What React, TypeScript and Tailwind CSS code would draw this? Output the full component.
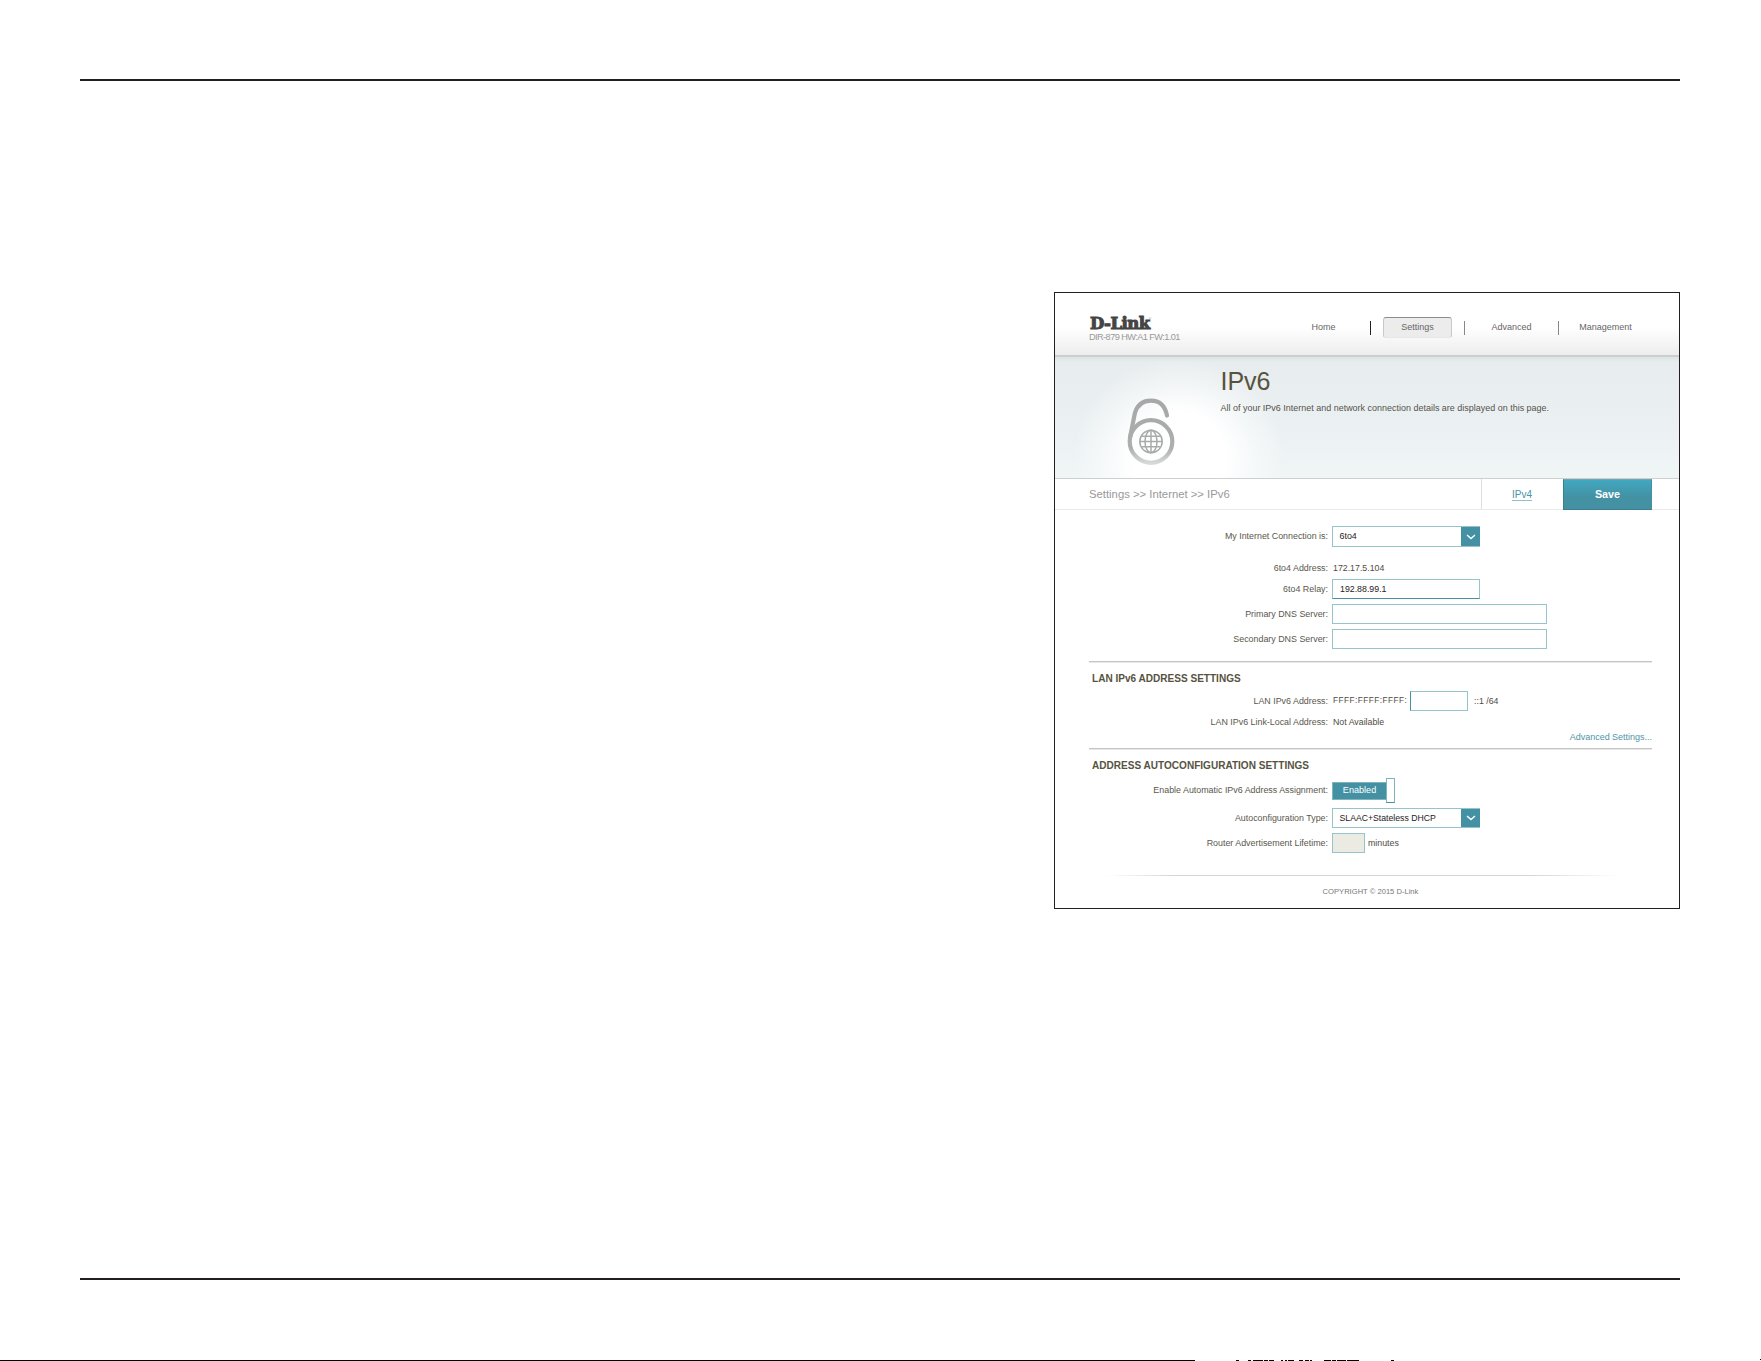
import React from 'react';

const label = 'w-[239px] shrink-0 text-right text-[8.9px] leading-none text-[#5a574d]';

function Row({ text, className, children }: { text: string; className: string; children: React.ReactNode }) {
  return (
    <div className={`flex items-center ${className}`}>
      <div className={label}>{text}</div>
      <div className="ml-1 flex items-center text-[8.8px] leading-none text-[#4f4c42]">{children}</div>
    </div>
  );
}

function Select({ text, className, textClass }: { text: string; className: string; textClass: string }) {
  return (
    <div className={`flex w-[148px] items-stretch justify-between border border-r-0 border-[#96c4cb] bg-white ${className}`}>
      <span className={`self-center pl-[6.5px] text-[#222] ${textClass}`}>{text}</span>
      <span className="flex w-[19px] items-center justify-center bg-[#4391a3]">
        <svg width="10" height="6" viewBox="0 0 10 6" fill="none" stroke="#fff" strokeWidth="1.4">
          <path d="M1 1 L5 4.6 L9 1" />
        </svg>
      </span>
    </div>
  );
}

function SixLock() {
  return (
    <svg width="48" height="68" viewBox="0 0 48 68" fill="none">
      <defs>
        <linearGradient id="grey" gradientUnits="userSpaceOnUse" x1="0" y1="0" x2="0" y2="67">
          <stop offset="0" stopColor="#a6a8a8" />
          <stop offset="0.75" stopColor="#adafaf" />
          <stop offset="1" stopColor="#dcdddd" />
        </linearGradient>
      </defs>
      <circle cx="24" cy="43.5" r="21.3" stroke="url(#grey)" strokeWidth="4.2" />
      <path d="M3.2 38.5 L7.9 15 C10.5 6 16 2.6 24 2.6 C33 2.6 38.2 8.5 40 17.5" stroke="url(#grey)" strokeWidth="4.2" strokeLinecap="round" />
      <g stroke="#a9abab" strokeWidth="1.5">
        <circle cx="24" cy="43.5" r="11.2" />
        <ellipse cx="24" cy="43.5" rx="6" ry="11.2" />
        <path d="M24 32.3V54.7M12.8 43.5H35.2M14.5 38.3H33.5M14.5 48.7H33.5" />
      </g>
    </svg>
  );
}

const bits = [
  [1236, 3], [1248, 3], [1253, 10], [1264, 4], [1269, 5], [1281, 2], [1285, 2], [1288, 6],
  [1299, 4], [1305, 4], [1310, 2], [1324, 7], [1332, 4], [1337, 9], [1347, 12], [1391, 3],
];

export default function App() {
  return (
    <div className="flex h-[1361px] w-[1761px] flex-col overflow-hidden bg-white font-['Liberation_Sans',Arial,sans-serif]">
      <div className="mt-[79px] ml-[80px] h-[2px] w-[1600px] shrink-0 bg-[#231f20]" />
      <main className="mt-[211px] mr-[81px] flex h-[617px] w-[626px] shrink-0 flex-col self-end border border-[#231f20] bg-white">
        <header className="flex h-[62px] shrink-0 justify-between bg-linear-to-b from-white from-55% to-[#ededed] pr-[26px] pl-[34px]">
          <div className="pt-[23px]">
            <div className="flex h-[16px] items-center pl-px">
              <span className="w-[59px] origin-left scale-x-[1.03] font-['DejaVu_Serif'] text-[16px] leading-none font-bold tracking-[-0.5px] whitespace-nowrap text-[#444] [-webkit-text-stroke:1px_#444]">D-Link</span>
              <span className="-mt-[9px] text-[3px] leading-none text-[#777]">®</span>
            </div>
            <div className="text-[9.2px] leading-[10px] tracking-[-0.57px] whitespace-nowrap text-[#999]">DIR-879 HW:A1 FW:1.01</div>
          </div>
          <nav className="mt-[24px] flex h-[21px] items-center text-[9px] text-[#666]">
            <span className="w-[93px] text-center">Home</span>
            <i className="h-[14px] w-px bg-[#222]" />
            <span className="flex w-[93px] justify-center">
              <span className="flex h-[21px] w-[69px] items-center justify-center rounded-[3px] border border-[#c9c9c9] border-t-[#8c8c8c] border-b-[#e6e6e6] bg-[#ececec]">Settings</span>
            </span>
            <i className="h-[14px] w-px bg-[#888]" />
            <span className="w-[93px] text-center">Advanced</span>
            <i className="h-[14px] w-px bg-[#888]" />
            <span className="w-[94px] pr-px text-center">Management</span>
          </nav>
        </header>
        <section className="flex h-[124px] shrink-0 border-t-2 border-b border-t-[#c9cfcf] border-b-[#ccd0d1] bg-[radial-gradient(ellipse_105px_100px_at_124px_100px,#fff_0%,#fff_45%,#ffffff80_70%,#ffffff00_100%),linear-gradient(to_bottom,#dde2e2_0,#e7ecee_5px,#ebf1f3_60%,#f0f5f6_100%)] pl-[72px]">
          <div className="w-[93.5px] shrink-0 pt-[41px]">
            <SixLock />
          </div>
          <div className="pt-[10px]">
            <h1 className="text-[25px] leading-[28px] text-[#57533c]">IPv6</h1>
            <p className="mt-[7px] text-[8.98px] leading-[12px] whitespace-nowrap text-[#55524a]">
              All of your IPv6 Internet and network connection details are displayed on this page.
            </p>
          </div>
        </section>
        <div className="flex h-[31px] shrink-0 items-stretch border-b border-[#e9eaea] pr-[27px] pl-[34px]">
          <div className="flex flex-1 items-center text-[11.3px] text-[#999]">Settings &gt;&gt; Internet &gt;&gt; IPv6</div>
          <div className="flex w-[82px] items-center justify-center border-l border-[#dcdfe0] pt-[3px] pr-px text-[10px] text-[#4a93a8]">
            <span className="border-b border-[#8fbfca] leading-[10px]">IPv4</span>
          </div>
          <div className="-mb-px flex w-[89px] items-center justify-center border border-t-[#72a5b0] border-r-[#4391a3] border-b-[#3a7f90] border-l-[#3a7f90] bg-linear-to-b from-[#41a8c0] to-[#4391a3] to-60% text-[10.8px] font-bold text-white">Save</div>
        </div>
        <div className="ml-[34px] flex w-[563px] flex-col">
          <Row text="My Internet Connection is:" className="mt-[16px] h-[21px]">
            <Select text="6to4" className="h-[21px]" textClass="text-[8.9px]" />
          </Row>
          <Row text="6to4 Address:" className="mt-[15px] h-[12px]"><span className="pl-px">172.17.5.104</span></Row>
          <Row text="6to4 Relay:" className="mt-[5px] h-[20px]">
            <div className="flex h-[20px] w-[148px] items-center border border-[#96c4cb] border-b-[#4391a3] pl-[7px] text-[#222]">192.88.99.1</div>
          </Row>
          <Row text="Primary DNS Server:" className="mt-[5px] h-[20px]">
            <div className="h-[20px] w-[215px] border border-[#96c4cb]" />
          </Row>
          <Row text="Secondary DNS Server:" className="mt-[5px] h-[20px]">
            <div className="h-[20px] w-[215px] border border-[#96c4cb]" />
          </Row>
          <div className="mt-[12px] h-[2px] border-t border-b border-t-[#c4c4c4] border-b-[#e8e8e8]" />
          <h2 className="mt-[9px] pl-[3px] text-[10.06px] leading-[13px] font-bold text-[#57533f]">LAN IPv6 ADDRESS SETTINGS</h2>
          <Row text="LAN IPv6 Address:" className="mt-[6px] h-[20px]">
            <span className="w-[78px] pl-px text-[8.2px] tracking-[0.5px]">FFFF:FFFF:FFFF:</span>
            <div className="mr-[6px] h-[20px] w-[58px] border border-[#96c4cb] border-l-[#4391a3]" />
            ::1 /64
          </Row>
          <Row text="LAN IPv6 Link-Local Address:" className="mt-[5px] h-[12px]"><span className="pl-px">Not Available</span></Row>
          <div className="mt-[3px] text-right text-[8.98px] leading-[12px] text-[#4f94a8]">Advanced Settings...</div>
          <div className="mt-[5px] h-[2px] border-t border-b border-t-[#c4c4c4] border-b-[#e8e8e8]" />
          <h2 className="mt-[9px] pl-[3px] text-[10.06px] leading-[13px] font-bold text-[#57533f]">ADDRESS AUTOCONFIGURATION SETTINGS</h2>
          <Row text="Enable Automatic IPv6 Address Assignment:" className="mt-[6px] h-[25px]">
            <div className="flex h-[18px] w-[54px] items-center justify-center border border-r-0 border-[#7fb4be] bg-[#4391a3] text-[9.1px] text-white">Enabled</div>
            <div className="h-[25px] w-[9px] border border-[#7fb4be] border-b-[#4391a3] bg-white" />
          </Row>
          <Row text="Autoconfiguration Type:" className="mt-[5px] h-[20px]">
            <Select text="SLAAC+Stateless DHCP" className="h-[20px]" textClass="text-[8.7px]" />
          </Row>
          <Row text="Router Advertisement Lifetime:" className="mt-[5px] h-[20px]">
            <div className="mr-[3px] h-[20px] w-[33px] border border-[#96c4cb] bg-[#ebebe4]" />
            minutes
          </Row>
        </div>
        <footer className="mt-[22px] ml-[50px] w-[531px] text-center text-[7.6px] text-[#777]">
          <div className="h-px bg-[linear-gradient(to_right,transparent,#d4d6d6_13%,#d4d6d6_80%,transparent_97%)]" />
          <p className="mt-[11px] leading-[10px]">COPYRIGHT © 2015 D-Link</p>
        </footer>
      </main>
      <div className="mt-[369px] ml-[80px] h-[2px] w-[1600px] shrink-0 bg-[#231f20]" />
      <svg className="mt-[79px] block shrink-0" width="1761" height="2" viewBox="0 0 1761 2" shapeRendering="crispEdges">
        <rect y="1" width="1195" height="1" />
        {bits.map(([x, w]) => (
          <rect key={x} x={x} y="1" width={w} height="1" />
        ))}
        <rect x="1760" width="1" height="1" />
      </svg>
    </div>
  );
}
